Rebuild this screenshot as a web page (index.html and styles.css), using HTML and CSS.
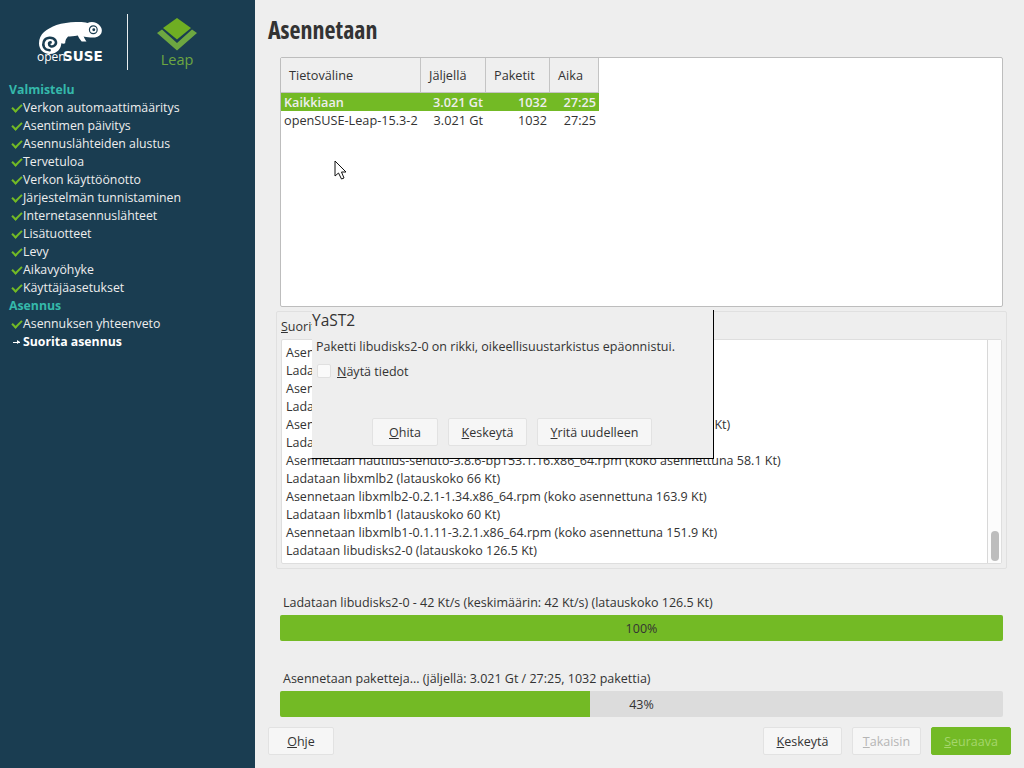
FILE: index.html
```html
<!DOCTYPE html>
<html lang="fi">
<head>
<meta charset="utf-8">
<title>Asennetaan</title>
<link rel="stylesheet" href="styles.css">
</head>
<body>
<div class="app">
  <aside class="sidebar">
    <div class="logos">
      <div class="logo-suse">
        <svg class="chameleon" viewBox="0 0 66 34" width="64" height="33">
          <path class="cham-body" d="M0 22C0 12 8 7 18 3C28 0 42 -1 50 1C54 -1 60 0 63 4C65.500 7 65 10 64 12C62 15 58 16.500 53 16C50 16 47 15 46 15C47 17 48 19 49 20L44 20C42 18 41 16 40 14C36 15 32 15 30 15C28 17 27 19 27 22C25 23 24 22 23 22C23 27 19 33 11 33C4 33 0 28 0 22Z"/>
          <path class="cham-line" d="M11 29C5 29 3.500 24 5 20C7 15.500 14 15 17 19C19 23 15 26 12 25C9.500 24 10 21 12 21"/>
          <circle class="cham-line thin" cx="56" cy="8" r="4"/>
          <circle class="cham-eye" cx="56.500" cy="8" r="1.500"/>
        </svg>
        <div class="suse-word"><span class="open">open</span><span class="suse">SUSE</span></div>
      </div>
      <div class="logo-rule"></div>
      <div class="logo-leap">
        <svg viewBox="0 0 40 34" width="40" height="34">
          <path class="leap-top" d="M20 1L34 11L20 22.500L6 11Z"/>
          <path class="leap-low" d="M0 16L5 12.500L20 26L35 12.500L40 16L20 33.500Z"/>
        </svg>
        <div class="leap-word">Leap</div>
      </div>
    </div>
    <ul class="steps">
      <li class="head">Valmistelu</li>
      <li class="done">Verkon automaattimääritys</li>
      <li class="done">Asentimen päivitys</li>
      <li class="done">Asennuslähteiden alustus</li>
      <li class="done">Tervetuloa</li>
      <li class="done">Verkon käyttöönotto</li>
      <li class="done">Järjestelmän tunnistaminen</li>
      <li class="done">Internetasennuslähteet</li>
      <li class="done">Lisätuotteet</li>
      <li class="done">Levy</li>
      <li class="done">Aikavyöhyke</li>
      <li class="done">Käyttäjäasetukset</li>
      <li class="head">Asennus</li>
      <li class="done">Asennuksen yhteenveto</li>
      <li class="current">Suorita asennus</li>
    </ul>
  </aside>
  <main class="main">
    <h1 class="title">Asennetaan</h1>
    <div class="media-box">
      <table class="media">
        <thead>
          <tr><th class="c1">Tietoväline</th><th class="c2">Jäljellä</th><th class="c3">Paketit</th><th class="c4">Aika</th></tr>
        </thead>
        <tbody>
          <tr class="sel"><td>Kaikkiaan</td><td class="num">3.021 Gt</td><td class="num">1032</td><td class="num">27:25</td></tr>
          <tr><td>openSUSE-Leap-15.3-2</td><td class="num">3.021 Gt</td><td class="num">1032</td><td class="num">27:25</td></tr>
        </tbody>
      </table>
    </div>
    <section class="group">
      <div class="group-label"><u>S</u>uoritettavat toiminnot</div>
      <div class="log">
        <div class="log-lines">
          <div>Asennetaan nautilus-extension-tilix-1.9.3-bp153.1.1.x86_64.rpm</div>
          <div>Ladataan nautilus-sendto (latauskoko 32 Kt)</div>
          <div>Asennetaan libnautilus-extension1-3.38.2-1.x86_64.rpm</div>
          <div>Ladataan nautilus-sendto-lang (latauskoko 21 Kt)</div>
          <div>Asennetaan nautilus-sendto-lang-3.8.noarch.rpm (koko asennettuna 96.6 Kt)</div>
          <div>Ladataan nautilus-sendto (latauskoko 24 Kt)</div>
          <div>Asennetaan nautilus-sendto-3.8.6-bp153.1.16.x86_64.rpm (koko asennettuna 58.1 Kt)</div>
          <div>Ladataan libxmlb2 (latauskoko 66 Kt)</div>
          <div>Asennetaan libxmlb2-0.2.1-1.34.x86_64.rpm (koko asennettuna 163.9 Kt)</div>
          <div>Ladataan libxmlb1 (latauskoko 60 Kt)</div>
          <div>Asennetaan libxmlb1-0.1.11-3.2.1.x86_64.rpm (koko asennettuna 151.9 Kt)</div>
          <div>Ladataan libudisks2-0 (latauskoko 126.5 Kt)</div>
        </div>
        <div class="scroll"><div class="thumb"></div></div>
      </div>
    </section>
    <div class="progress-label first">Ladataan libudisks2-0 - 42 Kt/s (keskimäärin: 42 Kt/s) (latauskoko 126.5 Kt)</div>
    <div class="bar"><div class="fill" style="width:100%"></div><span class="pct">100%</span></div>
    <div class="progress-label second">Asennetaan paketteja... (jäljellä: 3.021 Gt / 27:25, 1032 pakettia)</div>
    <div class="bar"><div class="fill" style="width:42.9%"></div><span class="pct">43%</span></div>
    <div class="footer">
      <button class="btn help"><u>O</u>hje</button>
      <div class="spacer"></div>
      <button class="btn abort"><u>K</u>eskeytä</button>
      <button class="btn back" disabled><u>T</u>akaisin</button>
      <button class="btn next" disabled><u>S</u>euraava</button>
    </div>
  </main>
  <svg class="cursor" viewBox="0 0 14 20" width="14" height="20">
    <path d="M1 1V16L4.500 13L7.500 19L10 18L7.500 12H12Z"/>
  </svg>
  <div class="dialog">
    <div class="dialog-title">YaST2</div>
    <div class="dialog-body">
      <p class="dialog-msg">Paketti libudisks2-0 on rikki, oikeellisuustarkistus epäonnistui.</p>
      <label class="check"><span class="box"></span><span><u>N</u>äytä tiedot</span></label>
      <div class="dialog-btns">
        <button class="btn"><u>O</u>hita</button>
        <button class="btn"><u>K</u>eskeytä</button>
        <button class="btn"><u>Y</u>ritä uudelleen</button>
      </div>
    </div>
  </div>
</div>
</body>
</html>
```

FILE: styles.css
```css
* { box-sizing: border-box; }
html, body { margin: 0; padding: 0; height: 100%; }
body {
  font-family: "Open Sans", "Noto Sans", sans-serif;
  font-size: 12.500px;
  color: #333;
  background: #eeeeee;
  overflow: hidden;
}
.app { position: relative; display: flex; width: 1024px; height: 768px; }

/* sidebar */
.sidebar { width: 255px; flex: none; background: #1a3d51; color: #eeeeee; }
.logos { display: flex; height: 80px; padding: 14px 0 0 37px; }
.logo-suse { width: 66px; padding-top: 8px; }
.chameleon { display: block; margin-left: 2px; }
.cham-body { fill: #fff; }
.cham-line { fill: none; stroke: #1a3d51; stroke-width: 2.600; stroke-linecap: round; }
.cham-line.thin { stroke-width: 1.200; }
.cham-eye { fill: #1a3d51; }
.suse-word { display: flex; align-items: baseline; height: 14px; margin-top: -6px; line-height: 14px; color: #fff; }
.open { font-size: 12px; width: 26px; }
.suse { font-family: "DejaVu Sans", sans-serif; font-weight: 700; font-size: 13.500px; }
.logo-rule { width: 1px; height: 56px; margin-left: 24px; background: #e8eef0; }
.logo-leap { width: 40px; margin-left: 29px; padding-top: 3px; text-align: center; }
.logo-leap svg { display: block; }
.leap-top { fill: #6fae23; }
.leap-low { fill: #6da741; }
.leap-word { font-size: 14.500px; line-height: 17px; color: #6da741; }
.steps { list-style: none; margin: 0; padding: 1px 0 0 9px; line-height: 18px; font-size: 12.300px; }
.steps li { height: 18px; white-space: nowrap; }
.head { font-weight: 700; color: #35b9ab; }
.done, .current { position: relative; padding-left: 14px; }
.done::before {
  content: "";
  position: absolute;
  left: 3px;
  top: 5px;
  width: 8px;
  height: 4px;
  border-left: 2px solid #73ba25;
  border-bottom: 2px solid #73ba25;
  transform: rotate(-45deg);
}
.current { color: #fff; font-weight: 700; }
.current::before {
  content: "";
  position: absolute;
  left: 4px;
  top: 9px;
  width: 7px;
  height: 1px;
  background: #fff;
}
.current::after {
  content: "";
  position: absolute;
  left: 8px;
  top: 7px;
  border-left: 3px solid #fff;
  border-top: 2.500px solid transparent;
  border-bottom: 2.500px solid transparent;
}

/* main */
.main { flex: 1; display: flex; flex-direction: column; padding: 0 13px 0 13px; min-width: 0; }
.title {
  margin: 0;
  height: 57px;
  padding-top: 15px;
  font-family: "Open Sans", sans-serif;
  font-stretch: 75%;
  font-size: 24px;
  line-height: 30px;
  font-weight: 700;
  color: #333;
}
.media-box {
  width: 723px;
  height: 250px;
  margin-left: 12px;
  background: #fff;
  border: 1px solid #bdbdbd;
  border-radius: 2px;
  flex: none;
}
.media { width: 318px; border-collapse: separate; border-spacing: 0; table-layout: fixed; line-height: 18px; font-size: 12.700px; }
.media th {
  height: 35px;
  padding: 0 0 0 8px;
  text-align: left;
  font-weight: 400;
  background: #efefef;
  border-right: 1px solid #c4c4c4;
  border-bottom: 1px solid #c4c4c4;
}
.c1 { width: 140px; }
.c2 { width: 65px; }
.c3 { width: 64px; }
.c4 { width: 49px; }
.media td { height: 18px; padding: 0 3px; white-space: nowrap; }
.media .num { text-align: right; }
.sel td { background: #73ba25; color: #eeeeee; font-weight: 600; }
.group {
  width: 731px;
  height: 258px;
  margin: 4px 0 0 8px;
  padding: 0 4px 4px 4px;
  border: 1px solid #e0e0e0;
  border-radius: 2px;
  flex: none;
  display: flex;
  flex-direction: column;
}
.group-label { height: 27px; padding-top: 6px; line-height: 18px; }
.log {
  flex: 1;
  display: flex;
  background: #fff;
  border: 1px solid #dedede;
  border-radius: 2px;
  min-height: 0;
}
.log-lines { flex: 1; padding: 4px 0 0 4px; line-height: 18px; white-space: nowrap; overflow: hidden; }
.scroll { width: 14px; flex: none; border-left: 1px solid #d8d8d8; background: #fcfcfc; display: flex; flex-direction: column; justify-content: flex-end; padding: 0 2px 2px 3px; }
.thumb { height: 30px; border-radius: 4px; background: #bdbdbd; }
.progress-label { margin-left: 15px; line-height: 20px; height: 18px; }
.progress-label.first { margin-top: 24px; margin-bottom: 4px; }
.progress-label.second { margin-top: 28px; margin-bottom: 4px; }
.bar {
  position: relative;
  width: 723px;
  height: 26px;
  margin-left: 12px;
  background: #dcdcdc;
  border-radius: 2px;
  overflow: hidden;
  flex: none;
  text-align: center;
  line-height: 28px;
}
.fill { position: absolute; left: 0; top: 0; bottom: 0; background: #73ba25; }
.pct { position: relative; color: #333; }
.footer { display: flex; margin-top: 10px; }
.spacer { flex: 1; }
.btn {
  font: inherit;
  color: #333;
  height: 28px;
  padding: 0;
  background: #f6f6f6;
  border: 1px solid #e2e2e2;
  border-radius: 2px;
  white-space: nowrap;
}
.help { width: 66px; }
.abort { width: 79px; }
.back { width: 69px; margin-left: 10px; color: #b5b5b5; }
.next { width: 80px; margin-left: 10px; background: #73ba25; border-color: #73ba25; color: #a5d66c; }

/* dialog */
.dialog {
  position: absolute;
  left: 312px;
  top: 310px;
  width: 402px;
  height: 149px;
  background: #eeeeee;
  border-right: 1px solid #000;
  border-bottom: 1px solid #000;
}
.dialog-title { height: 22px; line-height: 20px; font-size: 15.500px; color: #333; }
.dialog-body { padding: 4px 0 0 4px; }
.dialog-msg { margin: 0; line-height: 22px; }
.check { display: flex; align-items: center; gap: 6px; margin-top: 4px; height: 18px; padding-left: 1px; }
.box { width: 14px; height: 14px; background: #fafafa; border: 1px solid #e0e0e0; border-radius: 2px; }
.dialog-btns { display: flex; justify-content: center; gap: 10px; margin-top: 38px; margin-left: -5px; }
.dialog-btns .btn:nth-child(1) { width: 66px; }
.dialog-btns .btn:nth-child(2) { width: 79px; }
.dialog-btns .btn:nth-child(3) { width: 115px; }

.cursor { position: absolute; left: 334px; top: 160px; }
.cursor path { fill: #fff; stroke: #111; stroke-width: 1; }
```
